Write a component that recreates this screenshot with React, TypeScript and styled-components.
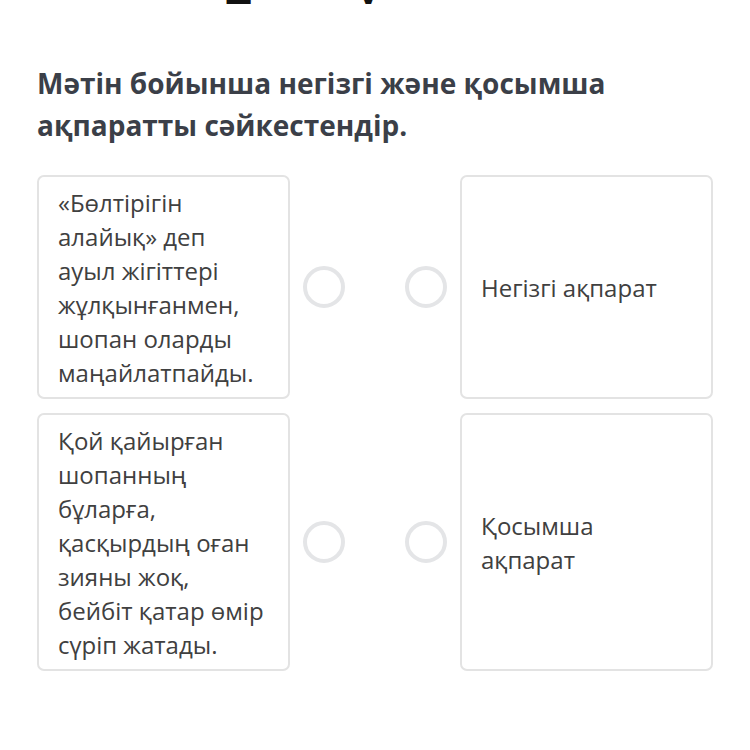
import React from "react";
import styled, { createGlobalStyle } from "styled-components";

const Global = createGlobalStyle`
  html, body { margin: 0; padding: 0; background: #ffffff; }
  body { font-family: "Open Sans", "Noto Sans", sans-serif; }
`;

const Page = styled.div`
  width: 750px;
  height: 750px;
  box-sizing: border-box;
  padding: 0 37px;
  overflow: hidden;
  background: #fff;
`;

const PrevLine = styled.div`
  height: 4px;
  overflow: hidden;
  display: flex;
  align-items: flex-end;
  gap: 106px;
  padding-left: 189px;
`;

const PrevGlyph = styled.span`
  font-size: 38px;
  line-height: 1;
  font-weight: 700;
  color: #111;
  display: block;
  transform: translateY(-30px);
  height: 4px;
`;

const Heading = styled.h2`
  margin: 59px 0 0;
  font-size: 28px;
  line-height: 41.5px;
  font-weight: 700;
  color: #3b3f48;
`;

const Board = styled.div`
  margin-top: 29px;
  display: grid;
  grid-template-columns: 253px 1fr 253px;
  row-gap: 14px;
`;

const Card = styled.div<{ $center?: boolean }>`
  box-sizing: border-box;
  border: 2px solid #e3e3e3;
  border-radius: 7px;
  padding: 9px 20px 7px 19px;
  font-size: 24px;
  line-height: 34px;
  color: #404040;
  display: flex;
  align-items: ${(p) => (p.$center ? "center" : "flex-start")};
  min-height: 223px;
`;

const Dots = styled.div`
  display: flex;
  align-items: center;
  justify-content: space-between;
  padding: 0 13px 0 13px;
`;

const Dot = styled.span`
  width: 42px;
  height: 42px;
  box-sizing: border-box;
  border-radius: 50%;
  border: 4px solid #e4e5e7;
  display: block;
`;

const rows = [
  {
    left: "«Бөлтірігін алайық» деп ауыл жігіттері жұлқынғанмен, шопан оларды маңайлатпайды.",
    right: ["Негізгі ақпарат"],
  },
  {
    left: "Қой қайырған шопанның бұларға, қасқырдың оған зияны жоқ, бейбіт қатар өмір сүріп жатады.",
    right: ["Қосымша", "ақпарат"],
  },
];

export default function App() {
  return (
    <Page>
      <Global />
      <PrevLine>
        <PrevGlyph>д</PrevGlyph>
        <PrevGlyph>у</PrevGlyph>
      </PrevLine>
      <Heading>
        Мәтін бойынша негізгі және қосымша ақпаратты сәйкестендір.
      </Heading>
      <Board>
        {rows.map((r, i) => (
          <React.Fragment key={i}>
            <Card>
              <div>{r.left}</div>
            </Card>
            <Dots>
              <Dot />
              <Dot />
            </Dots>
            <Card $center>
              <div>
                {r.right.map((t, j) => (
                  <React.Fragment key={j}>
                    {j > 0 && <br />}
                    {t}
                  </React.Fragment>
                ))}
              </div>
            </Card>
          </React.Fragment>
        ))}
      </Board>
    </Page>
  );
}
